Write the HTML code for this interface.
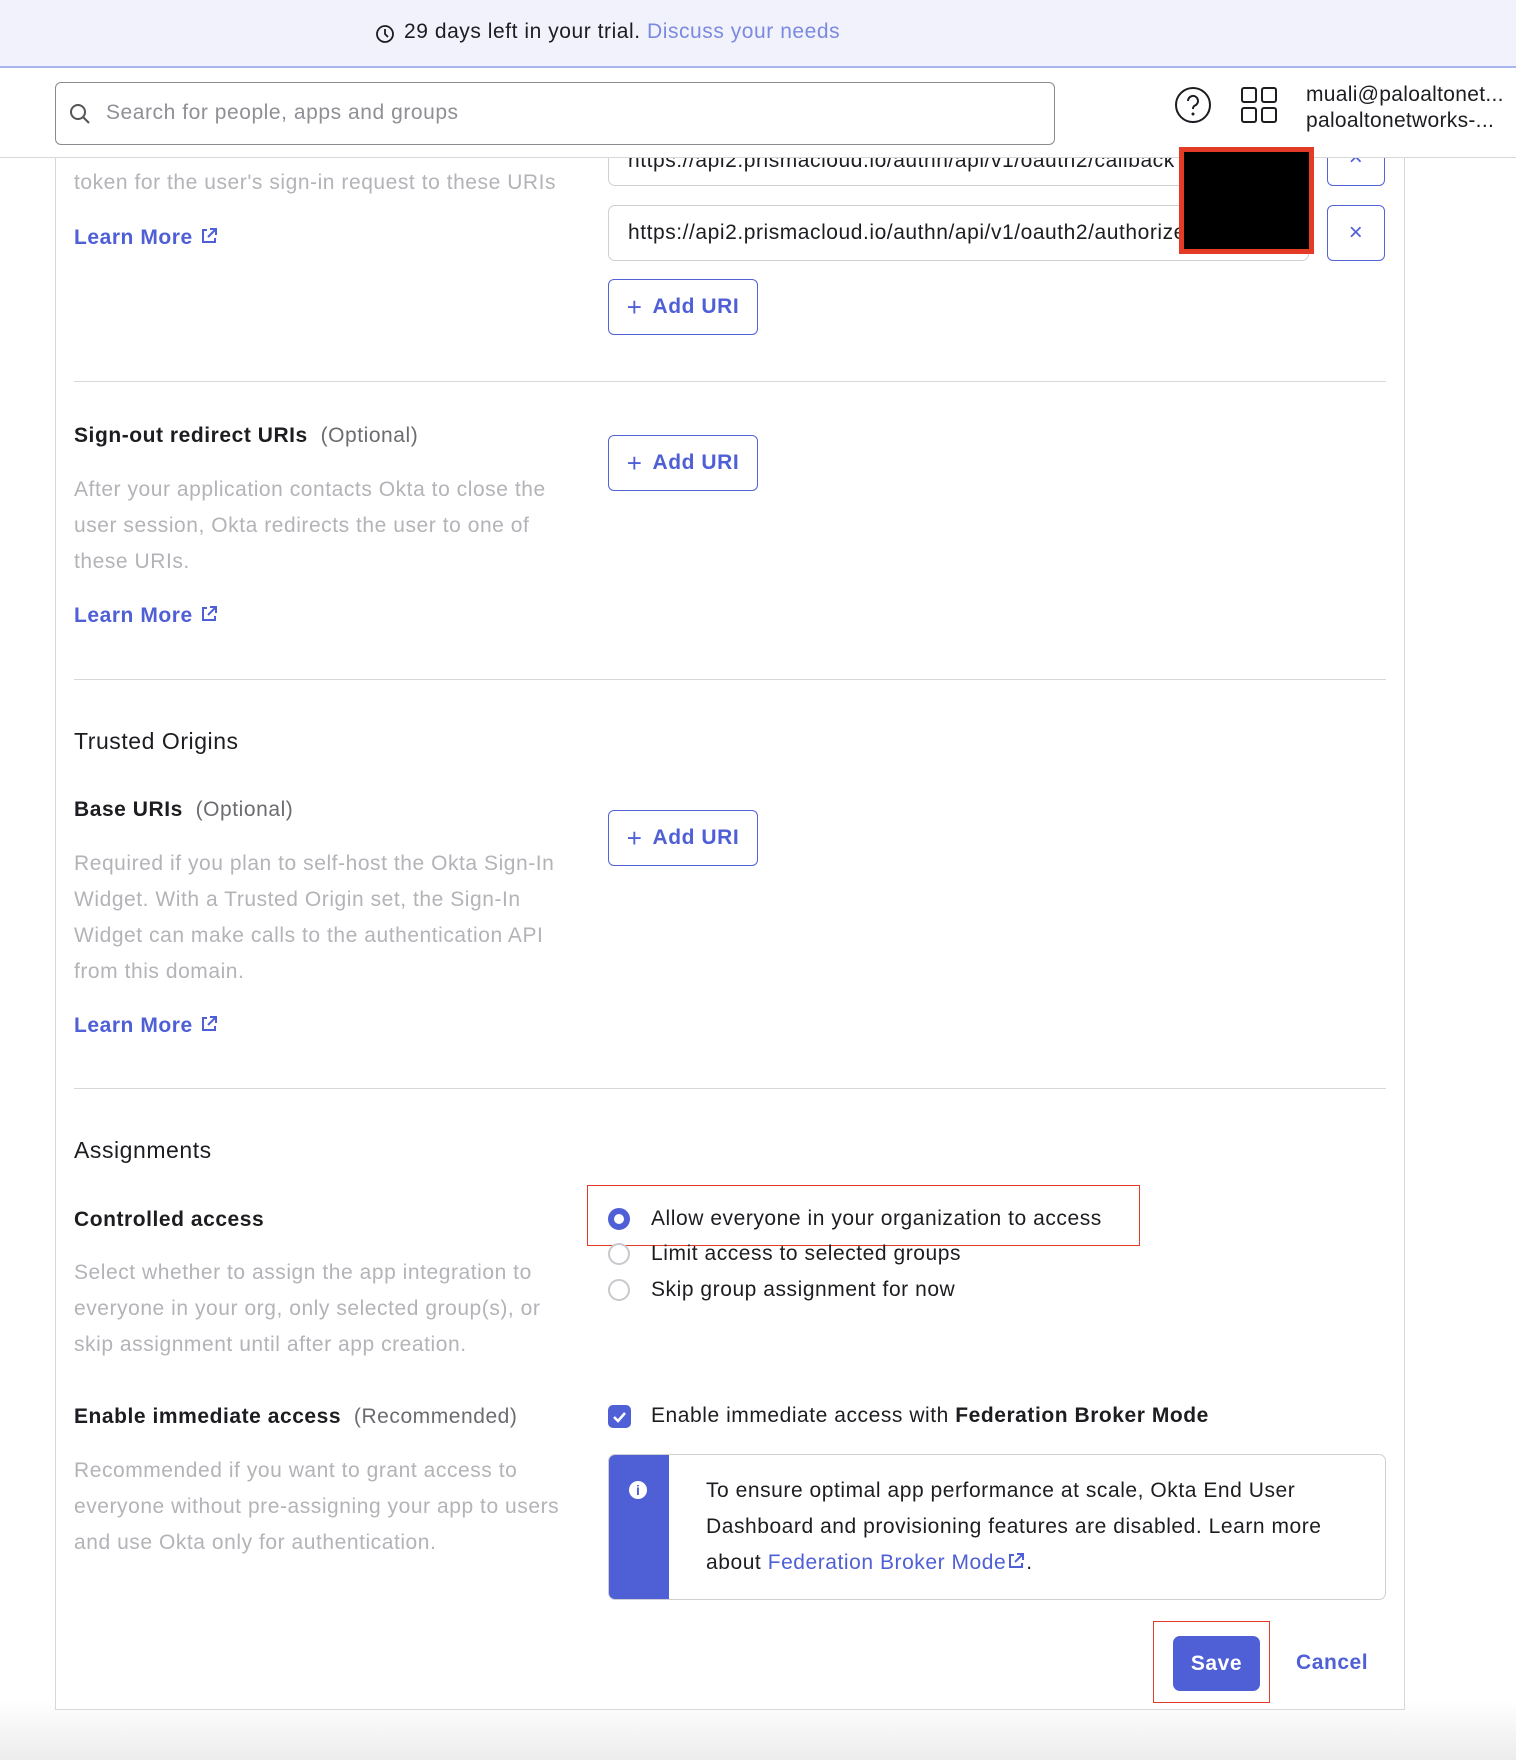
<!DOCTYPE html>
<html><head><meta charset="utf-8"><style>
*{box-sizing:border-box;margin:0;padding:0}
body{width:1516px;height:1760px;overflow:hidden;font-family:"Liberation Sans",sans-serif;background:linear-gradient(#fff 1700px,#ececec 1760px);color:#1d1d21;position:relative;font-size:21px;letter-spacing:0.55px}
.a{position:absolute;white-space:nowrap}
.banner{position:absolute;left:0;top:0;width:1516px;height:68px;background:#f1f2fb;border-bottom:2px solid #a9b6ef}
.header{position:absolute;left:0;top:69px;width:1516px;height:89px;background:#fff;border-bottom:1px solid #d8d8dc;z-index:5}
.card{position:absolute;left:55px;top:140px;width:1350px;height:1570px;border:1px solid #d8d8dc;border-top:none;background:#fff}
.g{color:#b3b3b8}
.blue{color:#4f5fd6}
.lm{font-weight:bold;color:#4f5fd6}
.btn{position:absolute;border:1.5px solid #5262d8;border-radius:6px;background:#fff;color:#4f5fd6;font-weight:bold;font-size:21px;display:flex;align-items:center;justify-content:center;gap:10px}
.inp{position:absolute;border:1px solid #cfcfd4;border-radius:7px;background:#fff;font-size:21px;padding-left:19px;display:flex;align-items:center;overflow:hidden;white-space:nowrap}
.hr{position:absolute;left:74px;width:1312px;height:1px;background:#d8d8dc}
.radio{position:absolute;width:22px;height:22px;border-radius:50%;border:2px solid #c8c8cd;background:#fff}
.ext{display:inline-block;vertical-align:-2px;margin-left:6px}
</style></head><body>
<div class="banner">
 <svg class="a" style="left:375px;top:24px" width="20" height="20" viewBox="0 0 20 20"><circle cx="10" cy="10" r="8" fill="none" stroke="#1d1d21" stroke-width="1.8"/><path d="M10 5v5l3 3" fill="none" stroke="#1d1d21" stroke-width="1.8"/></svg>
 <div class="a" style="left:404px;top:20px;font-size:21px">29 days left in your trial. <span style="color:#7b8ae0">Discuss your needs</span></div>
</div>
<div class="header">
 <div style="position:absolute;left:55px;top:13px;width:1000px;height:63px;border:1.5px solid #8a8a90;border-radius:6px"></div>
 <svg class="a" style="left:69px;top:34px" width="22" height="22" viewBox="0 0 22 22"><circle cx="9" cy="9" r="7" fill="none" stroke="#555" stroke-width="2"/><path d="M14 14l6 6" stroke="#555" stroke-width="2"/></svg>
 <div class="a" style="left:106px;top:32px;font-size:21px;color:#8f8f95">Search for people, apps and groups</div>
 <svg class="a" style="left:1174px;top:17px" width="38" height="38" viewBox="0 0 38 38"><circle cx="19" cy="19" r="17" fill="none" stroke="#1d1d21" stroke-width="2"/><path d="M14 15a5 5 0 1 1 7 4.5c-1.5.8-2 1.5-2 3.5" fill="none" stroke="#1d1d21" stroke-width="2"/><circle cx="19" cy="28" r="1.5" fill="#1d1d21"/></svg>
 <svg class="a" style="left:1240px;top:17px" width="38" height="38" viewBox="0 0 38 38" fill="none" stroke="#1d1d21" stroke-width="2"><rect x="2" y="2" width="14" height="14" rx="2"/><rect x="22" y="2" width="14" height="14" rx="2"/><rect x="2" y="22" width="14" height="14" rx="2"/><rect x="22" y="22" width="14" height="14" rx="2"/></svg>
 <div class="a" style="left:1306px;top:14px;font-size:21px;letter-spacing:0.3px">muali@paloaltonet...</div>
 <div class="a" style="left:1306px;top:40px;font-size:21px;letter-spacing:0.3px">paloaltonetworks-...</div>
</div>
<div class="card"></div>
<div class="inp" style="left:608px;top:130px;width:701px;height:56px;align-items:flex-end;padding-bottom:12px">https://api2.prismacloud.io/authn/api/v1/oauth2/callback</div>
<div class="btn" style="left:1327px;top:130px;width:58px;height:56px;font-weight:normal;font-size:24px">×</div>
<div class="a g" style="left:74px;top:171px">token for the user's sign-in request to these URIs</div>
<div class="a lm" style="left:74px;top:226px">Learn More<svg class="ext" width="20" height="20" viewBox="0 0 20 20" fill="none" stroke="#4f5fd6" stroke-width="2"><path d="M8 4H4v12h12v-4"/><path d="M11 3h6v6M17 3l-8 8"/></svg></div>
<div class="inp" style="left:608px;top:205px;width:701px;height:56px">https://api2.prismacloud.io/authn/api/v1/oauth2/authorize</div>
<div class="btn" style="left:1327px;top:205px;width:58px;height:56px;font-weight:normal;font-size:24px">×</div>
<div class="a" style="left:1179px;top:147px;width:135px;height:107px;background:#000;border:5px solid #e33b25;z-index:6"></div>
<div class="btn" style="left:608px;top:279px;width:150px;height:56px"><span style="font-weight:normal;font-size:26px">+</span>Add URI</div>
<div class="hr" style="top:381px"></div>
<div class="a" style="left:74px;top:424px"><b>Sign-out redirect URIs</b> <span style="color:#6b6b70">&nbsp;(Optional)</span></div>
<div class="btn" style="left:608px;top:435px;width:150px;height:56px"><span style="font-weight:normal;font-size:26px">+</span>Add URI</div>
<div class="a g" style="left:74px;top:472px;line-height:36px">After your application contacts Okta to close the<br>user session, Okta redirects the user to one of<br>these URIs.</div>
<div class="a lm" style="left:74px;top:604px">Learn More<svg class="ext" width="20" height="20" viewBox="0 0 20 20" fill="none" stroke="#4f5fd6" stroke-width="2"><path d="M8 4H4v12h12v-4"/><path d="M11 3h6v6M17 3l-8 8"/></svg></div>
<div class="hr" style="top:679px"></div>
<div class="a" style="left:74px;top:728px;font-size:23px">Trusted Origins</div>
<div class="a" style="left:74px;top:798px"><b>Base URIs</b> <span style="color:#6b6b70">&nbsp;(Optional)</span></div>
<div class="btn" style="left:608px;top:810px;width:150px;height:56px"><span style="font-weight:normal;font-size:26px">+</span>Add URI</div>
<div class="a g" style="left:74px;top:846px;line-height:36px">Required if you plan to self-host the Okta Sign-In<br>Widget. With a Trusted Origin set, the Sign-In<br>Widget can make calls to the authentication API<br>from this domain.</div>
<div class="a lm" style="left:74px;top:1014px">Learn More<svg class="ext" width="20" height="20" viewBox="0 0 20 20" fill="none" stroke="#4f5fd6" stroke-width="2"><path d="M8 4H4v12h12v-4"/><path d="M11 3h6v6M17 3l-8 8"/></svg></div>
<div class="hr" style="top:1088px"></div>
<div class="a" style="left:74px;top:1137px;font-size:23px">Assignments</div>
<div class="a" style="left:74px;top:1208px;font-weight:bold">Controlled access</div>
<div class="a g" style="left:74px;top:1255px;line-height:36px">Select whether to assign the app integration to<br>everyone in your org, only selected group(s), or<br>skip assignment until after app creation.</div>
<div class="a" style="left:587px;top:1185px;width:553px;height:61px;border:1.5px solid #e33b25"></div>
<div class="radio" style="left:608px;top:1208px;border:6px solid #4f5fd6"></div>
<div class="a" style="left:651px;top:1207px">Allow everyone in your organization to access</div>
<div class="radio" style="left:608px;top:1243px"></div>
<div class="a" style="left:651px;top:1242px">Limit access to selected groups</div>
<div class="radio" style="left:608px;top:1279px"></div>
<div class="a" style="left:651px;top:1278px">Skip group assignment for now</div>
<div class="a" style="left:74px;top:1405px"><b>Enable immediate access</b> <span style="color:#6b6b70">&nbsp;(Recommended)</span></div>
<div class="a" style="left:608px;top:1405px;width:23px;height:23px;border-radius:5px;background:#4f5fd6"><svg width="23" height="23" viewBox="0 0 23 23"><path d="M6 12l4 4 7-8" fill="none" stroke="#fff" stroke-width="2.5"/></svg></div>
<div class="a" style="left:651px;top:1404px">Enable immediate access with <b>Federation Broker Mode</b></div>
<div class="a g" style="left:74px;top:1453px;line-height:36px">Recommended if you want to grant access to<br>everyone without pre-assigning your app to users<br>and use Okta only for authentication.</div>
<div class="a" style="left:608px;top:1454px;width:778px;height:146px;border:1px solid #cfcfd4;border-radius:7px;overflow:hidden">
 <div style="position:absolute;left:0;top:0;width:60px;height:146px;background:#4f5fd6"></div>
 <div style="position:absolute;left:20px;top:26px;width:18px;height:18px;border-radius:50%;background:#fff;color:#4f5fd6;font-size:14px;font-weight:bold;text-align:center;line-height:18px;letter-spacing:0">i</div>
 <div style="position:absolute;left:97px;top:18px;line-height:36px;white-space:nowrap">To ensure optimal app performance at scale, Okta End User<br>Dashboard and provisioning features are disabled. Learn more<br>about <span class="blue">Federation Broker Mode<svg style="display:inline-block;vertical-align:-2px" width="20" height="20" viewBox="0 0 20 20" fill="none" stroke="#4f5fd6" stroke-width="2"><path d="M8 4H4v12h12v-4"/><path d="M11 3h6v6M17 3l-8 8"/></svg></span>.</div>
</div>
<div class="a" style="left:1153px;top:1621px;width:117px;height:82px;border:1.5px solid #e33b25"></div>
<div class="a" style="left:1173px;top:1636px;width:87px;height:55px;border-radius:7px;background:#4f5fd6;color:#fff;font-weight:bold;display:flex;align-items:center;justify-content:center">Save</div>
<div class="a lm" style="left:1296px;top:1651px">Cancel</div>
</body></html>
